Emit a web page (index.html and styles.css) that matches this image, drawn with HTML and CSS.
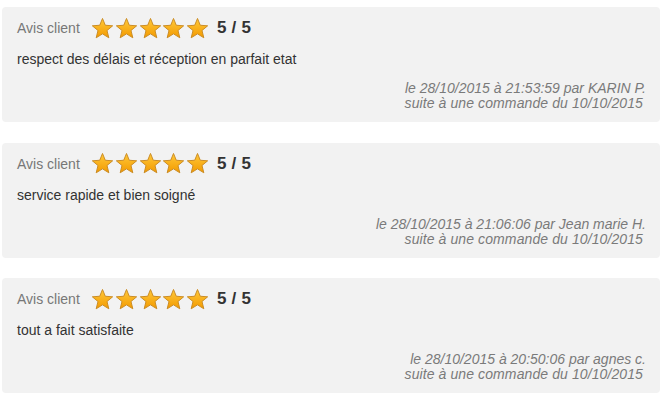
FILE: index.html
```html
<!DOCTYPE html>
<html>
<head>
<meta charset="UTF-8">
<title>Avis clients</title>
<link rel="stylesheet" href="styles.css">
</head>
<body>
   <svg width="0" height="0" class="defs">
      <defs>
         <linearGradient id="starGrad" x1="0" y1="0" x2="0" y2="1">
            <stop offset="0" stop-color="#ffc93a"/>
            <stop offset="1" stop-color="#f39a00"/>
         </linearGradient>
         <symbol id="star" viewBox="0 0 24 24">
            <path d="M12 1.5 L14.9 8.6 L22.6 9.2 L16.7 14.1 L18.6 21.7 L12 17.6 L5.4 21.7 L7.3 14.1 L1.4 9.2 L9.1 8.6 Z" fill="url(#starGrad)" stroke="#c98a22" stroke-width="1" stroke-linejoin="round"/>
         </symbol>
      </defs>
   </svg>
   <div class="reviews">
      <div class="review">
         <div class="review-head">
            <span class="label">Avis client</span>
            <span class="stars">
               <svg><use href="#star"/></svg><svg><use href="#star"/></svg><svg><use href="#star"/></svg><svg><use href="#star"/></svg><svg><use href="#star"/></svg>
            </span>
            <span class="score">5 / 5</span>
         </div>
         <p class="comment">respect des délais et réception en parfait etat</p>
         <div class="meta">
            <div>le 28/10/2015 à 21:53:59 par KARIN P.</div>
            <div class="order">suite à une commande du 10/10/2015</div>
         </div>
      </div>
      <div class="review">
         <div class="review-head">
            <span class="label">Avis client</span>
            <span class="stars">
               <svg><use href="#star"/></svg><svg><use href="#star"/></svg><svg><use href="#star"/></svg><svg><use href="#star"/></svg><svg><use href="#star"/></svg>
            </span>
            <span class="score">5 / 5</span>
         </div>
         <p class="comment">service rapide et bien soigné</p>
         <div class="meta">
            <div>le 28/10/2015 à 21:06:06 par Jean marie H.</div>
            <div class="order">suite à une commande du 10/10/2015</div>
         </div>
      </div>
      <div class="review">
         <div class="review-head">
            <span class="label">Avis client</span>
            <span class="stars">
               <svg><use href="#star"/></svg><svg><use href="#star"/></svg><svg><use href="#star"/></svg><svg><use href="#star"/></svg><svg><use href="#star"/></svg>
            </span>
            <span class="score">5 / 5</span>
         </div>
         <p class="comment">tout a fait satisfaite</p>
         <div class="meta">
            <div>le 28/10/2015 à 20:50:06 par agnes c.</div>
            <div class="order">suite à une commande du 10/10/2015</div>
         </div>
      </div>
   </div>
</body>
</html>
```

FILE: styles.css
```css
body {
  font-family: "Liberation Sans", Arial, sans-serif;
  margin: 0;
  padding: 0;
  background-color: #fff;
}
.defs {
  position: absolute;
  width: 0;
  height: 0;
}
.reviews {
  width: 658px;
  padding: 7px 0 0 2px;
  display: flex;
  flex-direction: column;
  gap: 20.5px;
}
.review {
  background-color: #f2f2f2;
  border-radius: 4px;
  height: 115px;
  box-sizing: border-box;
  padding: 10px 14px 0 15px;
}
.review-head {
  display: flex;
  align-items: center;
  height: 22px;
}
.review-head .label {
  font-size: 14px;
  color: #777;
  width: 74px;
}
.stars {
  display: flex;
  gap: 0.75px;
  margin-right: 8px;
}
.stars svg {
  width: 23px;
  height: 23px;
  display: block;
}
.score {
  font-size: 17px;
  font-weight: bold;
  color: #333;
  letter-spacing: 0.2px;
}
.comment {
  margin: 12px 0 0 0;
  font-size: 14px;
  line-height: 16px;
  color: #333;
}
.meta {
  margin-top: 14px;
  text-align: right;
  font-size: 14px;
  line-height: 15px;
  font-style: italic;
  color: #7a7a7a;
}
.meta .order {
  padding-right: 3px;
  letter-spacing: 0.1px;
}
```
